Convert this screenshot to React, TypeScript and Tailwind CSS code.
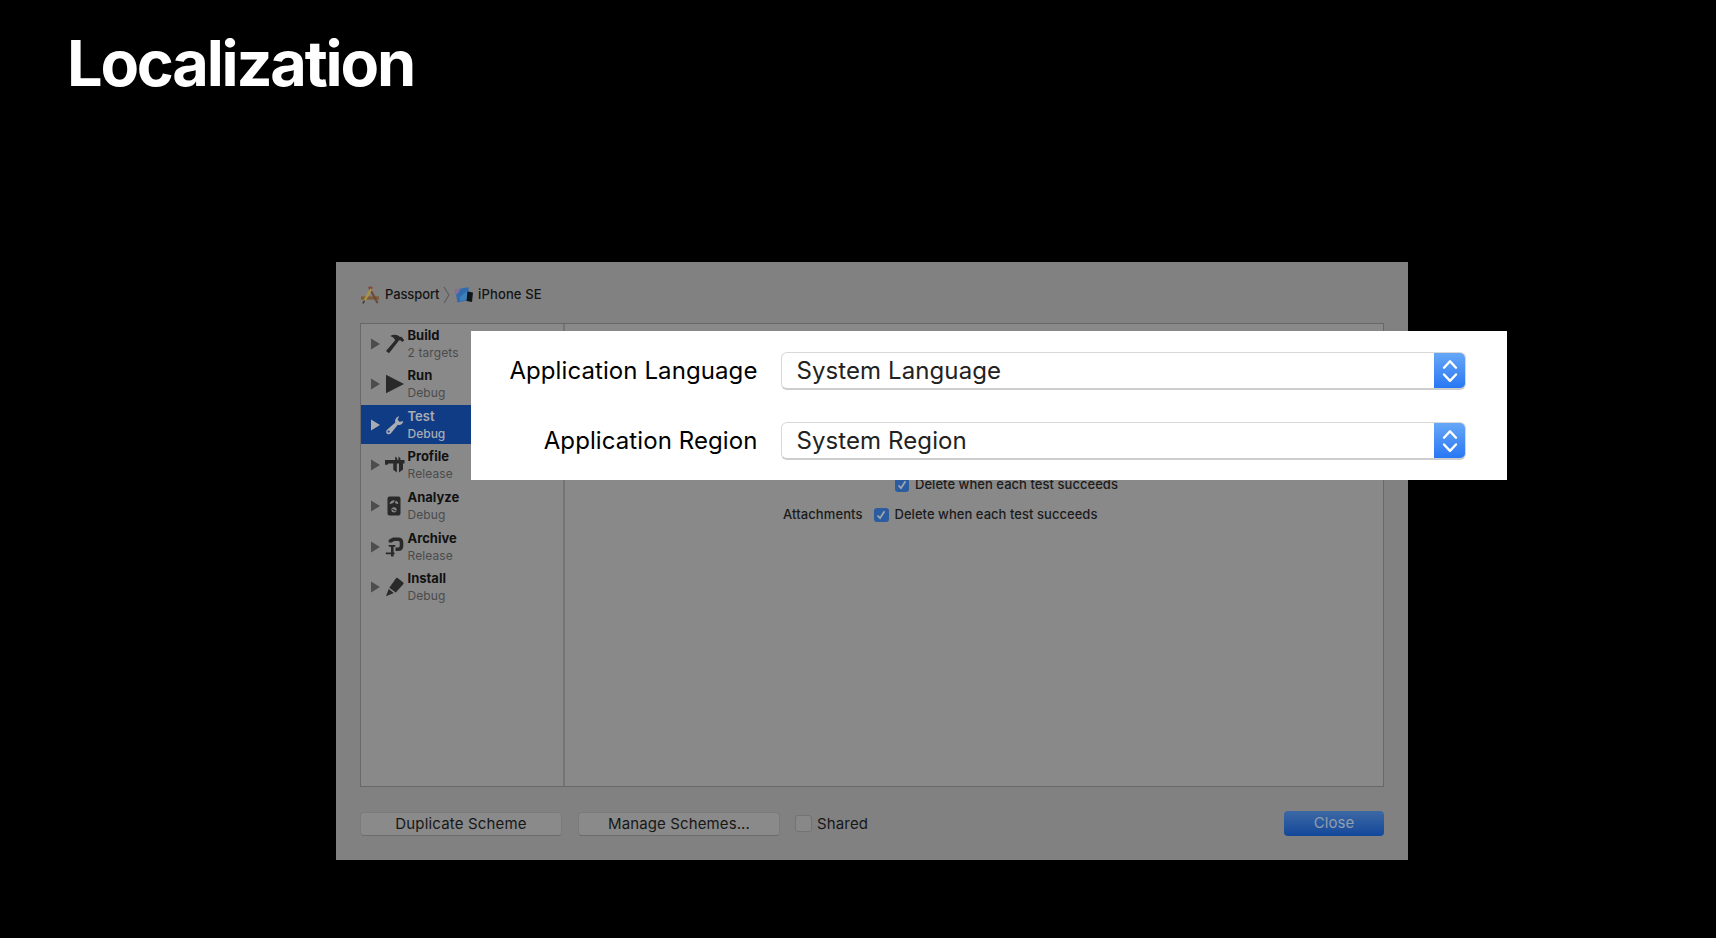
import React from "react";

const schemes = [
  { name: "Build", detail: "2 targets" },
  { name: "Run", detail: "Debug" },
  { name: "Test", detail: "Debug", selected: true },
  { name: "Profile", detail: "Release" },
  { name: "Analyze", detail: "Debug" },
  { name: "Archive", detail: "Release" },
  { name: "Install", detail: "Debug" },
];

function SchemeIcon({ name }: { name: string }) {
  return (
    <svg viewBox="0 0 20 20" className="h-5 w-5 shrink-0" fill="currentColor">
      {name === "Build" && (
        <path d="M5.200 2.100C8.500.2 12.500.5 15 3l1.400-.2 2.900 3.400-2 1.900-2-1.900-1.500.2-.6 1.100L4 19.200 1 17 10.200 6.200C9.200 4 7.500 2.900 5.200 2.100Z" />
      )}
      {name === "Run" && <path d="M1 .700 19 10 1 19.300Z" />}
      {name === "Test" && (
        <path d="M18.300 6.300c-.3 2.500-3 4.300-5.500 3.500L6 18.200c-1 1.300-2.800 1.500-4 .5s-1.100-2.800 0-3.900L10.300 7.600C9.600 5 11 2 14.200 1.300l-1.600 3.200 1.700 2.200Zm-13.900 9.500a1 1 0 1 0-1.500 1.400 1 1 0 0 0 1.500-1.400Z" fillRule="evenodd" />
      )}
      {name === "Profile" && (
        <path d="M0 5h10.200V1.500l2 1.700V5h1.200V1.500l2 1.700V5H19.500v3.500H18v6L14 17.500v-9h-2.200v9L8.300 14.700V8.500H3.500l-1 1.200H0Z" />
      )}
      {name === "Analyze" && (
        <>
          <path fillRule="evenodd" d="M4.500.500h9a2 2 0 0 1 2 2v15a2 2 0 0 1-2 2h-9a2 2 0 0 1-2-2v-15a2 2 0 0 1 2-2ZM4.500 8C5.500 3 12.500 3 13.500 8l-2.700-.5a2.200 2.200 0 0 0-3.600 0ZM9 11.200a2.600 2.600 0 1 0 0 5.200 2.600 2.600 0 0 0 0-5.200Z" />
          <path d="m7.300 13.200 3.400 1.800M9 7.500 10.500 4" stroke="currentColor" strokeWidth="1.100" />
        </>
      )}
      {name === "Archive" && (
        <g fill="none" stroke="currentColor">
          <path d="M5.500 5.500V3.800L8.500 2.300H13Q16.500 2.300 16.500 5.500V9Q16.500 12.300 13 12.300H10.500" strokeWidth="3.600" />
          <path d="M3.700 8.800h6.600M.8 16.300h8.700" strokeWidth="1.800" />
          <path d="M7.300 9v10.500" strokeWidth="2.600" />
        </g>
      )}
      {name === "Install" && (
        <path d="M12.200.800 18 5.200c.7.600.8 1.300.2 2L10.800 15.600 4.300 10.800 11 1.200c.3-.5.7-.7 1.200-.4ZM3.700 12 8.800 15.900 1 19.300Z" />
      )}
    </svg>
  );
}

function Check() {
  return (
    <span className="flex h-[14.500px] w-[14.500px] shrink-0 items-center justify-center rounded-[3px] bg-[#2b5c9f]">
      <svg viewBox="0 0 14 14" className="h-3.5 w-3.5" fill="none" stroke="#a3a8ae" strokeWidth="1.700">
        <path d="m3.500 7.500 2.500 2.700 4.500-7" />
      </svg>
    </span>
  );
}

function Popup({ label, value }: { label: string; value: string }) {
  return (
    <div className="flex h-[38px] items-center text-2xl tracking-[0.090px]">
      <span className="w-[286.500px] text-right text-black">{label}</span>
      <div className="ml-[23.500px] flex h-[38px] w-[685px] items-stretch overflow-hidden rounded-md border border-b-2 border-[#d8d8d8] border-b-[#cdcdcd] bg-white">
        <span className="flex flex-1 items-center pl-[14.500px] text-[#222]">{value}</span>
        <span className="-mt-px -mr-px -mb-0.5 flex w-8 items-center justify-center bg-linear-to-b from-[#68a8f7] to-[#2474f3]">
          <svg viewBox="0 0 16 24" className="mb-px h-6 w-4" fill="none" stroke="white" strokeWidth="2.400" strokeLinecap="round" strokeLinejoin="round">
            <path d="m2 8.700 6-6.400 6 6.400M2 15.500l6 6.400 6-6.400" />
          </svg>
        </span>
      </div>
    </div>
  );
}

export default function App() {
  return (
    <main className="relative h-[938px] w-[1716px] overflow-hidden bg-black pt-[25px] font-['Inter',sans-serif] whitespace-nowrap">
      <h1 className="ml-[67px] h-[76px] text-[63px] leading-[76px] font-bold tracking-[-2.200px] text-white">Localization</h1>

      <section className="mt-[161px] ml-[336px] flex h-[598px] w-[1072px] flex-col bg-[#818181] px-6">
        <div className="mt-[22px] flex h-[21px] items-center text-[13px] font-medium text-[#141414]">
          <svg viewBox="0 0 20 18" className="h-[18px] w-5" fill="none">
            <path d="M1 12h18" stroke="#7d5b35" strokeWidth="3.200" />
            <path d="m9 1 8.500 16" stroke="#6b4a40" strokeWidth="2.200" />
            <path d="M11.500 2.500 4 15.500" stroke="#ab9344" strokeWidth="2.400" />
            <path d="m4.500 14.500-1.500 3" stroke="#3c3430" strokeWidth="1.500" />
            <path d="m10 1 2.500 1.500" stroke="#8c4a44" strokeWidth="2.200" />
          </svg>
          <span className="ml-[5px] w-[54px] tracking-[-0.100px]">Passport</span>
          <svg viewBox="0 0 7 18" className="ml-1 h-[18px] w-[7px]" fill="none" stroke="#5c5c5c" strokeWidth="1.100">
            <path d="m1 1 5 8-5 8" />
          </svg>
          <svg viewBox="0 0 18 16" className="ml-[5px] h-4 w-[18px]">
            <path d="m0 2.500 13.500-2.300.5 12.800L2.500 15.500Z" fill="#2f6cae" />
            <path d="m0 2.500 6-1L1.500 8Z" fill="#8a6f92" />
            <path d="m5 10 7-6v8.500L5 14Z" fill="#3f7fba" />
            <path d="m12.500 4.500 5.500 1-1 9.500-5.500-1Z" fill="#10151c" />
          </svg>
          <span className="ml-[5px] tracking-[0.150px]">iPhone SE</span>
        </div>

        <div className="mt-[18px] flex h-[464px] w-[1024px] border border-[#686868] bg-[#898989]">
          <aside className="w-[204px] shrink-0 border-r-2 border-[#747474]">
            {schemes.map((s) => (
              <div key={s.name} className="h-[40.600px]">
                <div className={s.selected ? "flex h-[39.300px] items-center bg-[#103c85] pl-2.5 text-[#a9adb3]" : "flex h-[39.300px] items-center pl-2.5 text-[#292929]"}>
                  <svg viewBox="0 0 9 12" className={s.selected ? "h-3 w-[9px]" : "h-3 w-[9px] text-[#4d4d4d]"} fill="currentColor">
                    <path d="M0 .5 9 6 0 11.500Z" />
                  </svg>
                  <span className="ml-[5px] flex"><SchemeIcon name={s.name} /></span>
                  <div className="ml-[2.500px]">
                    <div className={s.selected ? "text-[13px] leading-[17px] font-semibold" : "text-[13px] leading-[17px] font-bold text-[#111]"}>{s.name}</div>
                    <div className={s.selected ? "text-xs leading-[17px] font-medium" : "text-xs leading-[17px] tracking-[0.100px] text-[#4b4b4b]"}>{s.detail}</div>
                  </div>
                </div>
              </div>
            ))}
          </aside>
          <div className="flex flex-1 flex-col pt-[153px] text-[13px] font-medium text-[#1b1b1b]">
            <div className="flex h-4 items-center pl-[329.500px]">
              <Check />
              <span className="ml-[6px] tracking-[0.040px]">Delete when each test succeeds</span>
            </div>
            <div className="mt-[14px] flex h-4 items-center pl-[218px]">
              <span className="w-[91px] tracking-[0.100px]">Attachments</span>
              <Check />
              <span className="ml-[6px] tracking-[0.040px]">Delete when each test succeeds</span>
            </div>
          </div>
        </div>

        <footer className="mt-6 flex h-[25px] items-center text-[15px] text-[#171717]">
          <button className="h-6 w-[202px] rounded-[4px] border border-[#7b7b7b] border-b-[#6c6c6c] bg-[#8a8a8a] pb-0.5 tracking-[0.160px]">Duplicate Scheme</button>
          <button className="ml-4 h-6 w-[202px] rounded-[4px] border border-[#7b7b7b] border-b-[#6c6c6c] bg-[#8a8a8a] pb-0.5 tracking-[0.120px]">Manage Schemes...</button>
          <span className="ml-[15px] h-[17px] w-[17px] rounded-[3px] border border-[#737373] bg-[#888]" />
          <span className="ml-[5px] pt-0.5 tracking-[0.150px]">Shared</span>
          <button className="ml-auto h-[25px] w-[100px] rounded-[4px] bg-linear-to-b from-[#3c68a4] to-[#12479a] text-[#929eae] tracking-[0.100px]">Close</button>
        </footer>
      </section>

      <section className="absolute top-[331px] left-[471px] flex h-[149px] w-[1036px] flex-col gap-8 bg-white pt-[21px]">
        <Popup label="Application Language" value="System Language" />
        <Popup label="Application Region" value="System Region" />
      </section>
    </main>
  );
}
